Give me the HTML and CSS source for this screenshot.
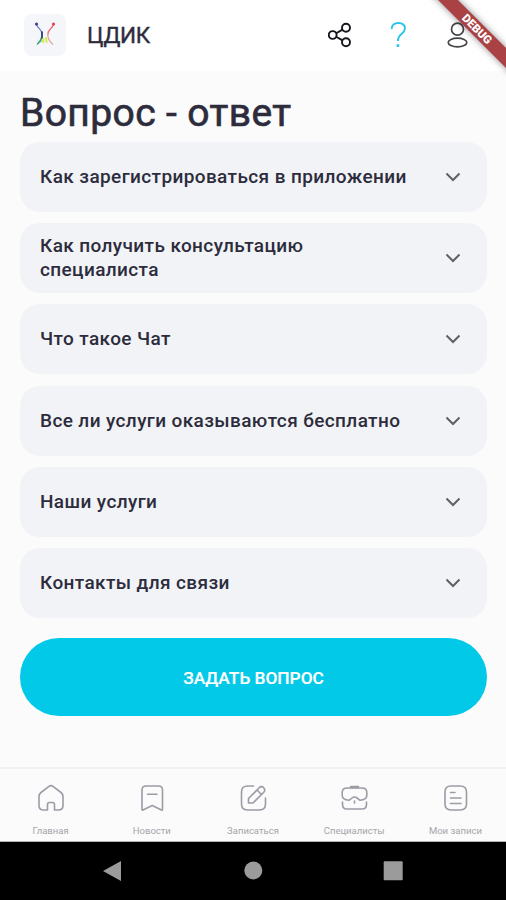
FILE: index.html
```html
<!DOCTYPE html>
<html lang="ru">
<head>
<meta charset="utf-8">
<title>Вопрос - ответ</title>
<link rel="stylesheet" href="styles.css">
</head>
<body>
<div class="screen">
  <header class="top">
    <div class="logo">
      <svg width="42" height="42" viewBox="0 0 42 42" fill="none" stroke-linecap="round">
        <path d="M12.500 10.500C14 15 18 15 18 20" stroke="#7a80bd" stroke-width="1.300"/>
        <path d="M18 18C18.500 22 18 26 13.500 30" stroke="#3d9a7c" stroke-width="1.500"/>
        <path d="M29.500 10.500C28 15 24 15 24 20" stroke="#ed5966" stroke-width="1.300"/>
        <path d="M24 18C23 23 25 27 28.500 30" stroke="#e0a5a2" stroke-width="1.300"/>
        <path d="M18 18V24" stroke="#243579" stroke-width="1.500"/>
        <path d="M19.500 25L19 28M22 24L22.500 28" stroke="#d5e94c" stroke-width="2"/>
        <path d="M15.500 28L17 27" stroke="#39b779" stroke-width="1.500"/>
        <circle cx="12.500" cy="10" r="1.600" fill="#433d94"/>
        <circle cx="29.500" cy="10" r="1.600" fill="#e34152"/>
      </svg>
    </div>
    <div class="brand">ЦДИК</div>
    <div class="actions">
      <svg width="26" height="26" viewBox="0 0 26 26" fill="none" stroke="#15151c" stroke-width="1.900">
        <circle cx="4.700" cy="13" r="3.900"/><circle cx="18" cy="5.700" r="4"/><circle cx="18" cy="20.300" r="4"/>
        <path d="M8.200 11.200L14.500 7.600M8.200 14.800L14.500 18.400"/>
      </svg>
      <svg width="20" height="28" viewBox="0 0 20 28" fill="none" stroke="#28c5e8" stroke-width="1.900">
        <path d="M1.700 8C1.700 4 4.200 2 8.400 2C12.500 2 14.900 4.300 14.900 7.600C14.900 13.300 7.900 12.500 7.900 20"/>
        <path d="M7.900 23.300V25.900" stroke-width="2.700"/>
      </svg>
      <svg width="24" height="28" viewBox="0 0 24 28" fill="none" stroke="#444449" stroke-width="1.700">
        <circle cx="11.500" cy="8.200" r="6"/><ellipse cx="11.500" cy="21.500" rx="9.300" ry="4.300"/>
      </svg>
    </div>
  </header>
  <div class="ribbon">DEBUG</div>

  <main class="content">
    <h1>Вопрос - ответ</h1>
    <div class="list">
      <div class="card"><span class="q">Как зарегистрироваться в приложении</span><svg class="chev" viewBox="0 0 16 10"><path d="M1.500 1.500L8 8L14.500 1.500"/></svg></div>
      <div class="card"><span class="q">Как получить консультацию<br>специалиста</span><svg class="chev" viewBox="0 0 16 10"><path d="M1.500 1.500L8 8L14.500 1.500"/></svg></div>
      <div class="card"><span class="q">Что такое Чат</span><svg class="chev" viewBox="0 0 16 10"><path d="M1.500 1.500L8 8L14.500 1.500"/></svg></div>
      <div class="card"><span class="q">Все ли услуги оказываются бесплатно</span><svg class="chev" viewBox="0 0 16 10"><path d="M1.500 1.500L8 8L14.500 1.500"/></svg></div>
      <div class="card"><span class="q">Наши услуги</span><svg class="chev" viewBox="0 0 16 10"><path d="M1.500 1.500L8 8L14.500 1.500"/></svg></div>
      <div class="card"><span class="q">Контакты для связи</span><svg class="chev" viewBox="0 0 16 10"><path d="M1.500 1.500L8 8L14.500 1.500"/></svg></div>
    </div>
    <button class="ask">ЗАДАТЬ ВОПРОС</button>
  </main>

  <nav class="tabs">
    <div class="tab">
      <svg class="ico" viewBox="0 0 28 28"><path d="M10.500 26H6.500Q2 26 2 21.500V12.500Q2 10 4 8.500L12 2.300Q14 0.900 16 2.300L24 8.500Q26 10 26 12.500V21.500Q26 26 21.500 26H17.500V20.500Q17.500 18.500 15.500 18.500H12.500Q10.500 18.500 10.500 20.500Z"/></svg>
      <span>Главная</span>
    </div>
    <div class="tab">
      <svg class="ico" viewBox="0 0 28 28"><path d="M4 6Q4 2 8 2H20.500Q24.500 2 24.500 6V25.500Q24.500 26.500 23.500 26L14.200 21.500L5 26Q4 26.500 4 25.500ZM9.500 10.300H19"/></svg>
      <span>Новости</span>
    </div>
    <div class="tab">
      <svg class="ico" viewBox="0 0 28 28"><path d="M14.500 2H8.500Q2.500 2 2.500 8V20Q2.500 26 8.500 26H20.500Q26.500 26 26.500 20V14M9.500 19V14.500L20.300 3.700Q22.500 1.700 24.700 3.700Q26.800 6 24.800 8.200L14 19ZM18 6L22.500 10.500"/></svg>
      <span>Записаться</span>
    </div>
    <div class="tab">
      <svg class="ico" viewBox="0 0 28 28"><path d="M7 4H22Q26.800 4 26.800 8.500V11.500Q26.800 15.500 20 16.300L17 14Q14.500 12 12 14L9 16.300Q2.200 15.500 2.200 11.500V8.500Q2.200 4 7 4ZM2.500 18V20.500Q2.500 25 7 25H22Q26.500 25 26.500 20.500V18M14.500 17V19"/><path d="M11 3H18" stroke-width="2.400"/></svg>
      <span>Специалисты</span>
    </div>
    <div class="tab">
      <svg class="ico" viewBox="0 0 28 28"><path d="M10 2H19Q25.500 2 25.500 8V20Q25.500 26 19 26H10Q4 26 4 20V8Q4 2 10 2ZM9.500 8.500H14M9.500 14H20M9.500 19.500H20"/></svg>
      <span>Мои записи</span>
    </div>
  </nav>

  <footer class="system">
    <svg width="20" height="22" viewBox="0 0 20 22"><path d="M18 1V21L0 11Z"/></svg>
    <svg width="20" height="22" viewBox="0 0 20 22"><circle cx="10.300" cy="10.500" r="9"/></svg>
    <svg width="20" height="22" viewBox="0 0 20 22"><rect x="0.700" y="1.200" width="19" height="19" rx="1"/></svg>
  </footer>
</div>
</body>
</html>
```

FILE: styles.css
```css
* { box-sizing: border-box; }
body { margin: 0; font-family: Roboto, "Liberation Sans", sans-serif; color: #2d2c3c; }
.screen {
  position: relative;
  width: 506px;
  height: 900px;
  overflow: hidden;
  display: flex;
  flex-direction: column;
  background: #fbfbfb;
}
.top {
  height: 71px;
  flex: none;
  display: flex;
  align-items: center;
  padding: 0 36px 2px 24px;
  background: #fff;
}
.logo { width: 42px; height: 42px; border-radius: 8px; background: #f4f6f9; }
.logo svg { display: block; }
.brand { margin-left: 21px; font-size: 22.5px; line-height: 28px; font-weight: 400; letter-spacing: -0.3px; -webkit-text-stroke: 0.4px; white-space: nowrap; }
.actions { margin-left: auto; display: flex; align-items: center; gap: 36px; }
.actions svg { display: block; }
.ribbon {
  position: absolute;
  left: 417px;
  top: 22px;
  width: 120px;
  height: 14px;
  transform: rotate(45deg);
  background: #aa4245;
  color: #fff;
  font-size: 11.5px;
  line-height: 14px;
  font-weight: 900;
  text-align: center;
  box-shadow: 0 0 7px rgba(0, 0, 0, 0.45);
}
.content { flex: 1; padding: 19px 19px 0 20px; }
h1 { margin: 0; height: 52px; font-size: 39px; line-height: 46px; font-weight: 400; letter-spacing: 0.4px; -webkit-text-stroke: 0.7px; white-space: nowrap; }
.list { display: grid; grid-auto-rows: 70px; gap: 11.2px; }
.card {
  display: flex;
  align-items: center;
  justify-content: space-between;
  padding: 0 26px 0 20px;
  border-radius: 20px;
  background: #f1f3f7;
}
.q { font-size: 19px; line-height: 24px; font-weight: 500; letter-spacing: 0.39px; white-space: nowrap; }
.chev { width: 16px; height: 10px; fill: none; stroke: #606065; stroke-width: 2; }
.ask {
  display: block;
  width: 100%;
  height: 78px;
  margin-top: 20.5px;
  padding: 1px 0 0;
  border: 0;
  border-radius: 39px;
  background: #02c9e8;
  color: #fff;
  font: 500 17.3px/22px Roboto, sans-serif;
  -webkit-text-stroke: 0.2px;
}
.tabs {
  height: 75px;
  flex: none;
  display: grid;
  grid-template-columns: repeat(5, 1fr);
  border-top: 2px solid #f1f1f2;
  border-bottom: 1px solid #b5b5b5;
}
.tab { display: flex; flex-direction: column; align-items: center; padding-top: 15px; }
.tab span { margin-top: 13px; font-size: 9.5px; line-height: 12px; color: #a5a5aa; white-space: nowrap; }
.ico { width: 28px; height: 28px; fill: none; stroke: #9c9ca6; stroke-width: 1.6; stroke-linejoin: round; stroke-linecap: round; }
.system {
  height: 58px;
  flex: none;
  display: flex;
  align-items: center;
  justify-content: space-between;
  padding: 0 103px;
  background: #000;
}
.system svg { display: block; fill: #9b9b9b; }
```
